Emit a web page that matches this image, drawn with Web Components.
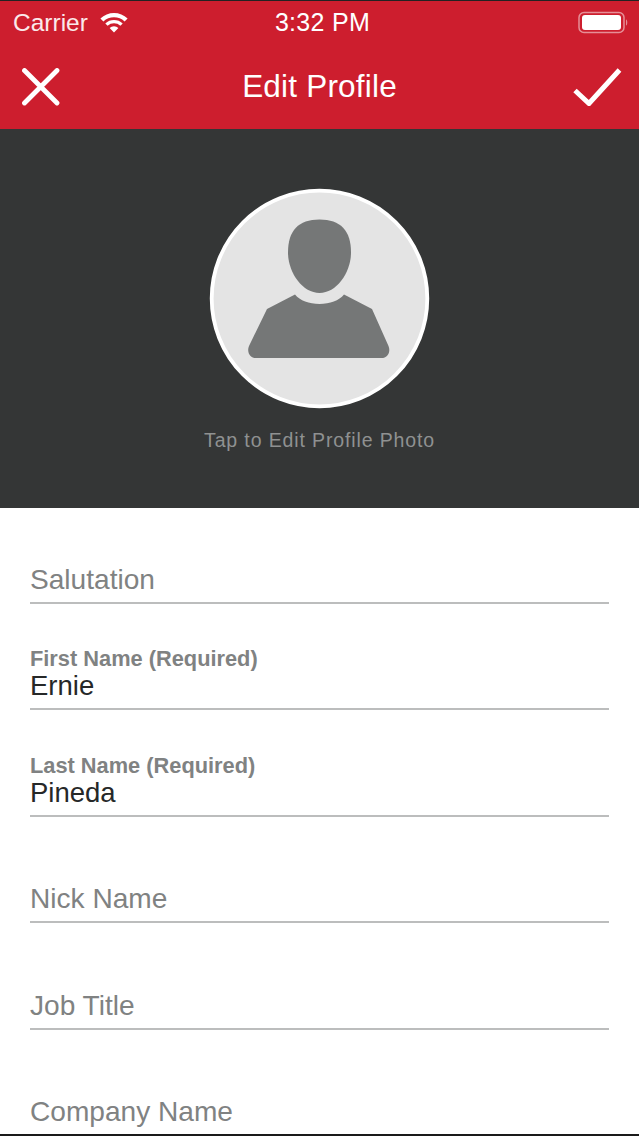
<!DOCTYPE html>
<html><head><meta charset="utf-8">
<style>
html,body{margin:0;padding:0;background:#fff}
body{width:639px;height:1136px;overflow:hidden;font-family:"Liberation Sans",Arial,sans-serif;position:relative}
</style></head><body>
<profile-app>
  <status-bar></status-bar>
  <nav-bar title="Edit Profile"></nav-bar>
  <photo-header caption="Tap to Edit Profile Photo"></photo-header>
  <profile-form>
    <form-field height="96" placeholder="Salutation"></form-field>
    <form-field label="First Name (Required)" value="Ernie"></form-field>
    <form-field label="Last Name (Required)" value="Pineda"></form-field>
    <form-field placeholder="Nick Name"></form-field>
    <form-field placeholder="Job Title"></form-field>
    <form-field placeholder="Company Name"></form-field>
  </profile-form>
</profile-app>
<script>
function def(name, html){
  customElements.define(name, class extends HTMLElement{
    connectedCallback(){
      const r=this.shadowRoot||this.attachShadow({mode:'open'});
      r.innerHTML=html(this);
    }
  });
}
def('profile-app',()=>`<style>:host{display:flex;flex-direction:column;width:639px;height:1136px;overflow:hidden;border-top:1px solid #222;box-sizing:border-box;position:relative}
.b{position:absolute;left:0;right:0;bottom:0;height:2px;background:#1a1a1a}</style><slot></slot><div class="b"></div>`);
def('status-bar',()=>`<style>
:host{display:flex;flex:none;align-items:center;justify-content:space-between;height:43px;background:#cd1e2e;color:#fff;padding:0 13px;box-sizing:border-box;position:relative;font-size:24.5px}
.l{display:flex;align-items:center;gap:11px;color:#fbe9ea}
.t{position:absolute;left:6px;right:0;text-align:center;font-size:25px;letter-spacing:.3px;top:7px}
svg{display:block}
</style>
<div class="l"><span>Carrier</span><svg width="30" height="22" viewBox="0 0 30 22"><path d="M15 20.5l-4.400-4.600a6.500 6.500 0 0 1 8.800 0zM8.600 13.800l-2.300-2.400a13 13 0 0 1 17.400 0l-2.300 2.400a9.600 9.600 0 0 0-12.800 0zM4.400 9.400L1.400 6.500a19.800 19.800 0 0 1 27.200 0l-3 2.900a15.600 15.600 0 0 0-21.200 0z" fill="#fff"/></svg></div>
<div class="t">3:32 PM</div>
<svg width="52" height="24" viewBox="0 0 52 24" style="margin-right:-4px"><rect x="1" y="1.500" width="45" height="20" rx="5" fill="none" stroke="#fff" stroke-opacity=".5" stroke-width="1.500"/><rect x="4" y="4" width="39" height="15" rx="3" fill="#fff"/><path d="M48 8.500c1.600.4 1.800 5.600 0 6z" fill="#fff" fill-opacity=".5"/></svg>`);
def('nav-bar',h=>`<style>
:host{display:flex;flex:none;align-items:center;justify-content:space-between;height:85px;background:#cd1e2e;color:#fff;padding:0 17px 0 22px;box-sizing:border-box;font-size:31.500px;letter-spacing:.2px}
svg{display:block}
span{margin-left:7px}
</style>
<svg width="38" height="38" viewBox="0 0 38 38"><path d="M2.500 2.500L35 35M35 2.500L2.500 35" stroke="#fff" stroke-width="4.800" stroke-linecap="round" fill="none"/></svg>
<span>${h.getAttribute('title')}</span>
<svg width="50" height="38" viewBox="0 0 50 38"><path d="M3 22.500L17 35.500L47.500 2" stroke="#fff" stroke-width="5" fill="none"/></svg>`);
def('photo-header',h=>`<style>
:host{display:flex;flex:none;flex-direction:column;align-items:center;height:379px;background:#343636;box-sizing:border-box;padding-top:59px}
svg{display:block}
.c{margin-top:20px;font-size:19.500px;letter-spacing:.87px;color:#8f9191;line-height:22px}
</style>
<svg width="221" height="221" viewBox="209 188 221 221"><circle cx="319.500" cy="298.500" r="107.800" fill="#e4e4e4" stroke="#fff" stroke-width="3.800"/>
<path d="M319.500 219.500c-21 0-31.500 11-31.500 33c0 20 14.500 40.500 31.500 40.500s31.500-20.500 31.500-40.500c0-22-10.500-33-31.500-33z" fill="#757777"/>
<path d="M295 294.500c5 6 14 9.500 24.500 9.500s19.500-3.500 24.500-9.500l28 14.500l16.500 37c2.500 6-1 12-7 12H256c-6 0-9.500-6-7-12l18-37z" fill="#757777"/></svg>
<div class="c">${h.getAttribute('caption')}</div>`);
def('profile-form',()=>`<style>:host{display:flex;flex:none;flex-direction:column;padding:0 30px;background:#fff}</style><slot></slot>`);
def('form-field',h=>{
  const lab=h.getAttribute('label'),val=h.getAttribute('value'),ph=h.getAttribute('placeholder'),ht=h.getAttribute('height')||'106.400';
  return `<style>
:host{display:flex;flex-direction:column;justify-content:flex-end;height:${ht}px;flex:none;box-sizing:border-box;border-bottom:2px solid #bcbdbd}
.lab{font-size:21.800px;font-weight:700;color:#808282;line-height:22px}
.val{font-size:27.500px;color:#262828;line-height:31px;padding-bottom:7px}
.ph{font-size:28.100px;color:#808282;line-height:31px;padding-bottom:7px}
</style>${lab?`<div class="lab">${lab}</div><div class="val">${val}</div>`:`<div class="ph">${ph}</div>`}`;
});
</script>
</body></html>
